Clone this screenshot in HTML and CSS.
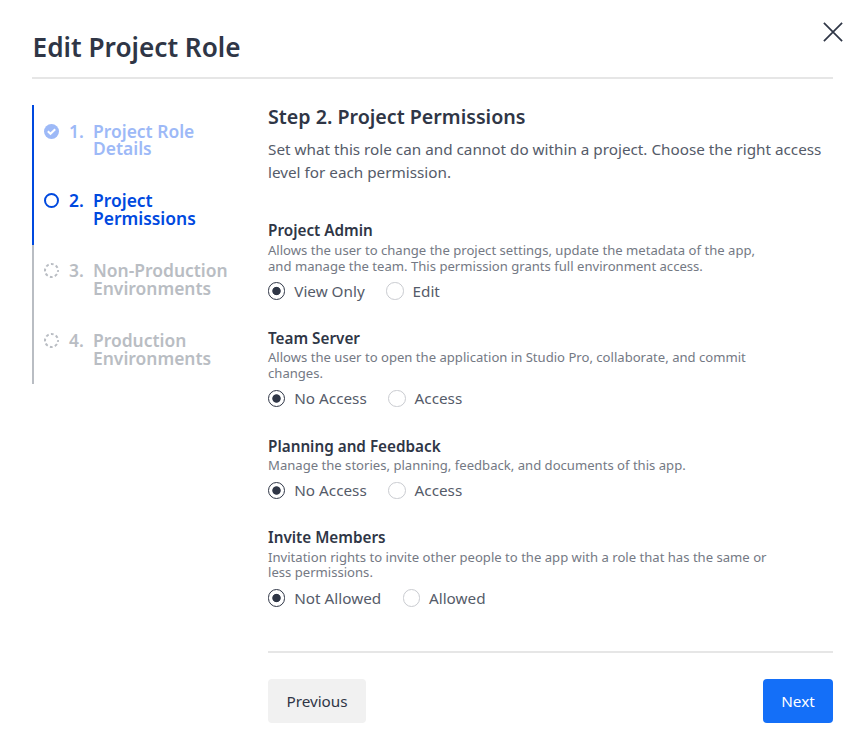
FILE: index.html
```html
<!DOCTYPE html>
<html lang="en">
<head>
<meta charset="utf-8">
<title>Edit Project Role</title>
<link rel="stylesheet" href="styles.css">
</head>
<body>
<main class="dialog">
  <header class="header">
    <h1>Edit Project Role</h1>
    <button class="close" aria-label="Close"><svg width="20" height="20" viewBox="0 0 20 20"><path d="M.9 .9 19.1 19.1M19.1 .9 .9 19.1" fill="none" stroke="#2f3646" stroke-width="1.7"/></svg></button>
  </header>
  <div class="body">
    <ol class="steps">
      <li class="step done"><svg class="mark" viewBox="0 0 15 15"><circle cx="7.5" cy="7.5" r="7.5" fill="#9db9f7"/><path d="M3.8 7.2 6.5 9.8 11.2 5.2" fill="none" stroke="#fff" stroke-width="2"/></svg><span class="num">1.</span><span>Project Role<br>Details</span></li>
      <li class="step current"><svg class="mark" viewBox="0 0 15 15"><circle cx="7.5" cy="7.5" r="6.5" fill="none" stroke="#0049df" stroke-width="2"/></svg><span class="num">2.</span><span>Project<br>Permissions</span></li>
      <li class="step"><svg class="mark" viewBox="0 0 15 15"><circle cx="7.5" cy="7.5" r="6.5" fill="none" stroke="#b9bdc3" stroke-width="2" stroke-dasharray="2.8 2.305" stroke-dashoffset="1.4"/></svg><span class="num">3.</span><span>Non-Production<br>Environments</span></li>
      <li class="step"><svg class="mark" viewBox="0 0 15 15"><circle cx="7.5" cy="7.5" r="6.5" fill="none" stroke="#b9bdc3" stroke-width="2" stroke-dasharray="2.8 2.305" stroke-dashoffset="1.4"/></svg><span class="num">4.</span><span>Production<br>Environments</span></li>
    </ol>
    <section class="content">
      <h2>Step 2. Project Permissions</h2>
      <p class="intro">Set what this role can and cannot do within a project. Choose the right access<br>level for each permission.</p>
      <div class="perm">
        <h3>Project Admin</h3>
        <p>Allows the user to change the project settings, update the metadata of the app,<br>and manage the team. This permission grants full environment access.</p>
        <div class="options"><label><i class="radio on"></i>View Only</label><label><i class="radio"></i>Edit</label></div>
      </div>
      <div class="perm">
        <h3>Team Server</h3>
        <p>Allows the user to open the application in Studio Pro, collaborate, and commit<br>changes.</p>
        <div class="options"><label><i class="radio on"></i>No Access</label><label><i class="radio"></i>Access</label></div>
      </div>
      <div class="perm">
        <h3>Planning and Feedback</h3>
        <p>Manage the stories, planning, feedback, and documents of this app.</p>
        <div class="options"><label><i class="radio on"></i>No Access</label><label><i class="radio"></i>Access</label></div>
      </div>
      <div class="perm">
        <h3>Invite Members</h3>
        <p>Invitation rights to invite other people to the app with a role that has the same or<br>less permissions.</p>
        <div class="options"><label><i class="radio on"></i>Not Allowed</label><label><i class="radio"></i>Allowed</label></div>
      </div>
      <footer class="footer"><button class="btn">Previous</button><button class="btn primary">Next</button></footer>
    </section>
  </div>
</main>
</body>
</html>
```
FILE: styles.css
```css
* { box-sizing: border-box; }
body { margin: 0; background: #fff; color: #2f3646; font-family: "Noto Sans", sans-serif; }
h1, h2, h3, p, ol { margin: 0; padding: 0; }
button { border: 0; background: none; padding: 0; font: inherit; color: inherit; }
.dialog { width: 865px; height: 756px; padding: 0 32px; }
.header { height: 79px; padding-top: 29px; border-bottom: 2px solid #e6e6e6; display: flex; justify-content: space-between; }
h1 { padding-left: .6px; font-size: 26.2px; line-height: 36px; font-weight: 600; white-space: nowrap; }
.close { width: 20px; height: 20px; margin: -7px -10px 0 0; }
.close svg { display: block; }
.body { display: flex; padding-top: 26px; }
.steps { width: 236px; list-style: none; }
.step { height: 69.75px; padding: 17.7px 0 0 10px; display: flex; border-left: 2px solid #b9bdc3; color: #b9bdc3; font-size: 17.46px; line-height: 17.6px; font-weight: 600; white-space: nowrap; }
.step.done { color: #9db9f7; border-color: #0049df; }
.step.current { color: #0049df; border-color: #0049df; }
.mark { width: 15px; height: 15px; margin: 1px 10px 0 0; flex: none; }
.num { width: 24px; flex: none; }
.content { width: 565px; white-space: nowrap; }
h2 { font-size: 19.65px; line-height: 24px; font-weight: 600; }
.intro { margin-top: 9px; font-size: 15.28px; line-height: 23px; color: #555b69; }
.perm { margin-top: 27.06px; }
.intro + .perm { margin-top: 36.4px; }
h3 { font-size: 15.28px; line-height: 20px; font-weight: 600; }
.perm p { padding-top: 2.4px; font-size: 13.1px; line-height: 15.72px; color: #747984; }
.options { display: flex; gap: 21.6px; margin-top: 6.7px; height: 20px; }
.options label { display: flex; align-items: center; gap: 8.8px; font-size: 15.28px; line-height: 20px; color: #555b69; }
.radio { width: 17.46px; height: 17.46px; border: 1px solid #c9cbd0; border-radius: 50%; }
.radio.on { border-color: #2f3646; background: radial-gradient(circle, #2f3646 0 3.8px, transparent 4.6px); }
.footer { margin-top: 43px; padding-top: 26px; border-top: 2px solid #e6e6e6; display: flex; justify-content: space-between; }
.btn { width: 98px; height: 44px; border-radius: 4px; background: #f1f1f1; font-size: 15.28px; }
.btn.primary { width: 70px; background: #146ff8; color: #fff; }
```
